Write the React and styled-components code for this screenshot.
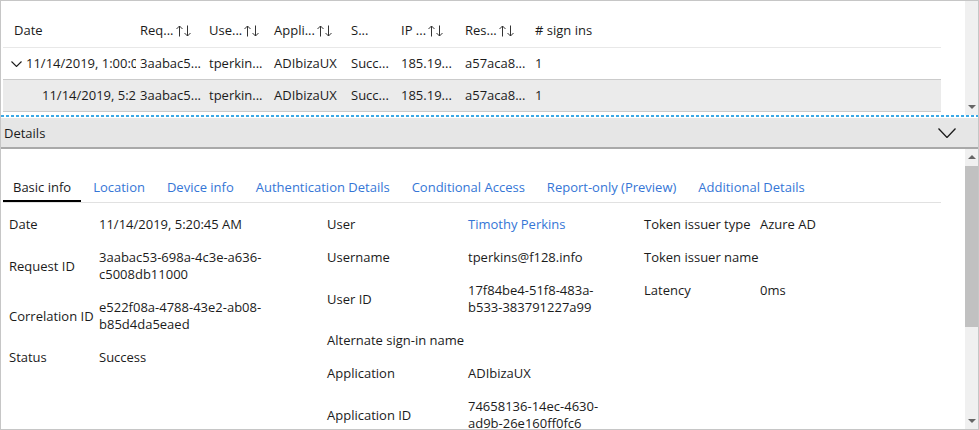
import React from 'react';
import styled, { createGlobalStyle } from 'styled-components';

const GlobalStyle = createGlobalStyle`
  html, body {
    margin: 0;
    padding: 0;
    background: #fff;
  }
  body {
    font-family: "Open Sans", Lato, sans-serif;
    font-size: 13px;
    color: #1b1b1b;
  }
`;

const Frame = styled.div`
  box-sizing: border-box;
  width: 979px;
  height: 430px;
  border: 1px solid #c6c6c6;
  display: flex;
  flex-direction: column;
  overflow: hidden;
`;

const GridPane = styled.div`
  height: 114px;
  display: flex;
  flex-shrink: 0;
`;

const GridBody = styled.div`
  flex: 1;
  padding: 0 24px 0 2px;
`;

const Row = styled.div`
  display: grid;
  grid-template-columns: 133px 69px 65px 77px 50px 64px 70px 1fr;
  line-height: 17px;
  background: ${(p) => (p.selected ? '#ebebeb' : 'transparent')};
  border-bottom: 1px solid ${(p) => (p.header ? '#e8e8e8' : '#cbcbcb')};
  padding: ${(p) => (p.header ? '21px 0 8px' : '7px 0')};
`;

const Cell = styled.div`
  padding-left: 4px;
  white-space: nowrap;
  overflow: hidden;
  display: flex;
  align-items: center;
`;

const DateCell = styled(Cell)`
  padding-left: ${(p) => p.indent}px;
`;

const Chevron = styled.svg`
  flex-shrink: 0;
  margin-right: 4px;
`;

const SortIcon = styled.svg`
  flex-shrink: 0;
  margin-left: 1px;
`;

const Scrollbar = styled.div`
  width: 13px;
  background: #f0f0f0;
  position: relative;
  flex-shrink: 0;
`;

const Arrow = styled.div`
  position: absolute;
  left: 3px;
  ${(p) => (p.up ? 'top' : 'bottom')}: ${(p) => p.offset}px;
  width: 0;
  height: 0;
  border-left: 4px solid transparent;
  border-right: 4px solid transparent;
  ${(p) => (p.up ? 'border-bottom' : 'border-top')}: 4px solid #666;
`;

const Thumb = styled.div`
  position: absolute;
  left: 0;
  right: 0;
  top: ${(p) => p.top}px;
  height: ${(p) => p.size}px;
  background: #c1c1c1;
`;

const Splitter = styled.div`
  height: 2px;
  flex-shrink: 0;
  background: repeating-linear-gradient(90deg, #3ba9e6 0 3px, transparent 3px 5px);
`;

const DetailsBar = styled.div`
  height: 29px;
  flex-shrink: 0;
  background: #e6e6e6;
  border-bottom: 2px solid #a9a9a9;
  display: flex;
  align-items: center;
  justify-content: space-between;
  padding: 0 18px 0 3px;
  margin-top: 1px;
`;

const ContentPane = styled.div`
  flex: 1;
  display: flex;
  min-height: 0;
`;

const Content = styled.div`
  flex: 1;
  padding: 26px 24px 0 2px;
  overflow: hidden;
`;

const TabStrip = styled.div`
  display: flex;
  gap: 2px;
  border-bottom: 1px solid #e1e1e1;
`;

const Tab = styled.div`
  padding: 4px 10px;
  line-height: 17px;
  border-bottom: 2px solid ${(p) => (p.active ? '#000' : 'transparent')};
  color: ${(p) => (p.active ? '#1b1b1b' : '#3576d6')};
  white-space: nowrap;
`;

const InfoGrid = styled.div`
  display: grid;
  grid-template-columns: 318px 317px 1fr;
  padding: 5px 0 0 6px;
  align-items: start;
`;

const InfoColumn = styled.div`
  display: grid;
  grid-template-columns: ${(p) => p.labelWidth}px 1fr;
`;

const Label = styled.div`
  padding: 8px 0;
  line-height: 17px;
  display: flex;
  align-items: center;
  white-space: nowrap;
`;

const Value = styled.div`
  padding: 8px 0;
  line-height: 17px;
  display: flex;
  flex-direction: column;
  justify-content: center;
  white-space: nowrap;
  color: ${(p) => (p.link ? '#3576d6' : 'inherit')};
`;

const columns = [
  { label: 'Date', sort: false },
  { label: 'Req...', sort: true },
  { label: 'Use...', sort: true },
  { label: 'Appli...', sort: true },
  { label: 'S...', sort: false },
  { label: 'IP ...', sort: true },
  { label: 'Res...', sort: true },
  { label: '# sign ins', sort: false },
];

const rowCells = ['3aabac5...', 'tperkin...', 'ADIbizaUX', 'Succ...', '185.19...', 'a57aca8...', '1'];

const tabs = [
  'Basic info',
  'Location',
  'Device info',
  'Authentication Details',
  'Conditional Access',
  'Report-only (Preview)',
  'Additional Details',
];

const info = [
  {
    labelWidth: 90,
    items: [
      { label: 'Date', value: ['11/14/2019, 5:20:45 AM'] },
      { label: 'Request ID', value: ['3aabac53-698a-4c3e-a636-', 'c5008db11000'] },
      { label: 'Correlation ID', value: ['e522f08a-4788-43e2-ab08-', 'b85d4da5eaed'] },
      { label: 'Status', value: ['Success'] },
    ],
  },
  {
    labelWidth: 141,
    items: [
      { label: 'User', value: ['Timothy Perkins'], link: true },
      { label: 'Username', value: ['tperkins@f128.info'] },
      { label: 'User ID', value: ['17f84be4-51f8-483a-', 'b533-383791227a99'] },
      { label: 'Alternate sign-in name', value: [''] },
      { label: 'Application', value: ['ADIbizaUX'] },
      { label: 'Application ID', value: ['74658136-14ec-4630-', 'ad9b-26e160ff0fc6'] },
    ],
  },
  {
    labelWidth: 116,
    items: [
      { label: 'Token issuer type', value: ['Azure AD'] },
      { label: 'Token issuer name', value: [''] },
      { label: 'Latency', value: ['0ms'] },
    ],
  },
];

function DownChevron({ width, height, stroke }) {
  return (
    <Chevron width={width} height={height} viewBox={`0 0 ${width} ${height}`}>
      <polyline
        points={`0.5,0.5 ${width / 2},${height - 0.5} ${width - 0.5},0.5`}
        fill="none"
        stroke="#1b1b1b"
        strokeWidth={stroke}
      />
    </Chevron>
  );
}

function SortArrows() {
  return (
    <SortIcon width="17" height="12" viewBox="0 0 17 12">
      <g fill="none" stroke="#333" strokeWidth="1">
        <path d="M4.5 11.5V1M1.5 4L4.5 1L7.5 4" />
        <path d="M12.5 0.5V11M9.5 8L12.5 11L15.5 8" />
      </g>
    </SortIcon>
  );
}

function DataRow({ date, indent, expander, selected }) {
  return (
    <Row selected={selected}>
      <DateCell indent={indent}>
        {expander && <DownChevron width={11} height={6} stroke={1.1} />}
        {date}
      </DateCell>
      {rowCells.map((c, i) => (
        <Cell key={i}>{c}</Cell>
      ))}
    </Row>
  );
}

export default function App() {
  return (
    <>
      <GlobalStyle />
      <Frame>
        <GridPane>
          <GridBody>
            <Row header>
              {columns.map((c, i) =>
                i === 0 ? (
                  <DateCell key={i} indent={11}>{c.label}</DateCell>
                ) : (
                  <Cell key={i}>
                    {c.label}
                    {c.sort && <SortArrows />}
                  </Cell>
                )
              )}
            </Row>
            <DataRow date="11/14/2019, 1:00:00 AM" indent={8} expander />
            <DataRow date="11/14/2019, 5:20:45 AM" indent={39} selected />
          </GridBody>
          <Scrollbar>
            <Arrow offset={6} />
          </Scrollbar>
        </GridPane>
        <Splitter />
        <DetailsBar>
          <span>Details</span>
          <DownChevron width={18} height={10} stroke={1.3} />
        </DetailsBar>
        <ContentPane>
          <Content>
            <TabStrip>
              {tabs.map((t, i) => (
                <Tab key={t} active={i === 0}>{t}</Tab>
              ))}
            </TabStrip>
            <InfoGrid>
              {info.map((col, ci) => (
                <InfoColumn key={ci} labelWidth={col.labelWidth}>
                  {col.items.map((it) => (
                    <React.Fragment key={it.label}>
                      <Label>{it.label}</Label>
                      <Value link={it.link}>
                        {it.value.map((line, li) => (
                          <span key={li}>{line}</span>
                        ))}
                      </Value>
                    </React.Fragment>
                  ))}
                </InfoColumn>
              ))}
            </InfoGrid>
          </Content>
          <Scrollbar>
            <Arrow up offset={6} />
            <Thumb top={17} size={161} />
            <Arrow offset={6} />
          </Scrollbar>
        </ContentPane>
      </Frame>
    </>
  );
}
